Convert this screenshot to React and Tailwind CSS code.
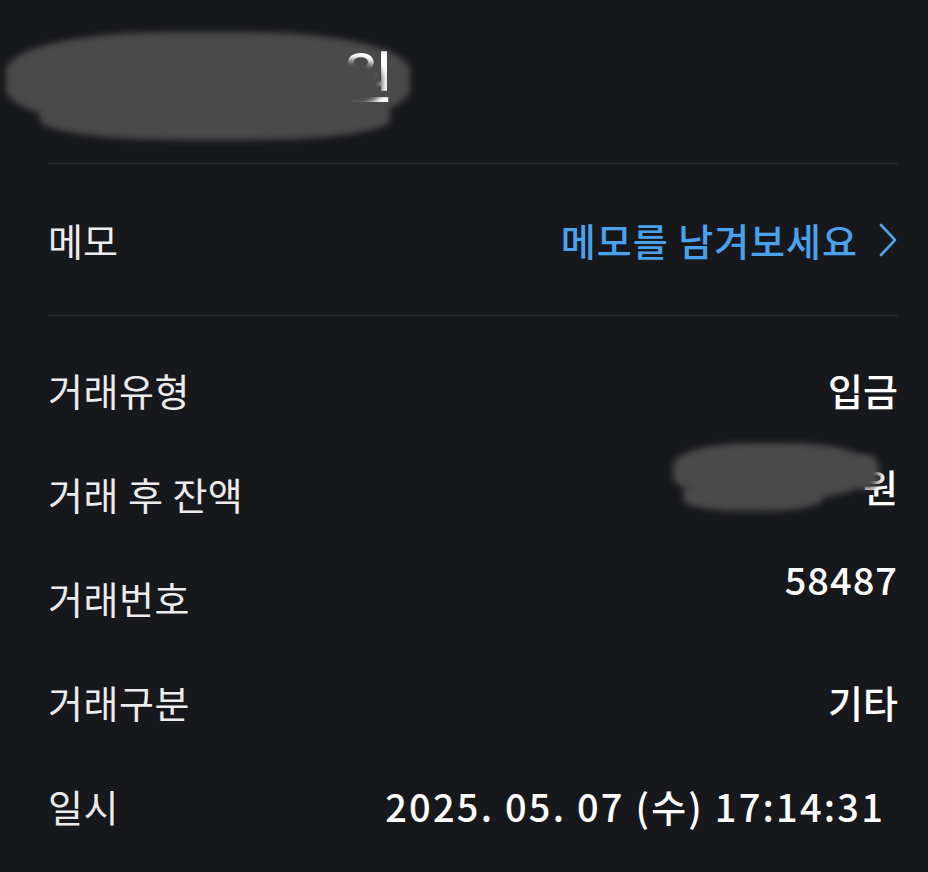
import React from 'react';

const font = { fontFamily: '"Noto Sans CJK KR", "Noto Sans", sans-serif' };

// gray smudge that hides redacted amounts
const Blur = ({ className }) => (
  <div className={`absolute rounded-[40%] bg-[#4a4a4a] blur-[3px] ${className}`} />
);

const Row = ({ label, children, valueClass = '' }) => (
  <div className="flex h-[104px] items-center justify-between">
    <span className="text-[38px] font-normal tracking-[0.5px] text-[#ececec]">{label}</span>
    <div className={`text-[38px] font-medium text-white ${valueClass}`}>{children}</div>
  </div>
);

export default function App() {
  return (
    <div className="min-h-screen bg-[#17181c] pl-[48px] pr-[30px]" style={font}>
      {/* header amount (redacted) */}
      <div className="relative h-[163px]">
        <Blur className="-left-[42px] top-[32px] h-[96px] w-[404px]" />
        <Blur className="-left-[8px] top-[90px] h-[50px] w-[350px]" />
        <div className="relative z-10 pl-[294px] pt-[46px] text-[56px] font-medium leading-none text-white">원</div>
        <Blur className="z-20 left-[270px] top-[60px] h-[46px] w-[64px]" />
      </div>
      <div className="border-t border-[#2c2d31]" />

      {/* memo */}
      <div className="flex h-[151px] items-center justify-between">
        <span className="text-[38px] text-[#ececec]">메모</span>
        <button className="flex items-center gap-[20px] text-[38px] font-medium tracking-[1px] text-[#4aa1ec]">
          <span>메모를 남겨보세요</span>
          <svg width="20" height="34" viewBox="0 0 20 34" fill="none">
            <path d="M3 2 L17 17 L3 32" stroke="#4aa1ec" strokeWidth="2.6" strokeLinecap="round" strokeLinejoin="round" />
          </svg>
        </button>
      </div>
      <div className="border-t border-[#2c2d31]" />

      <div className="pt-[21px]">
        <Row label="거래유형">입금</Row>
        <Row label="거래 후 잔액" valueClass="mb-[16px]">
          <div className="relative pl-[190px]">
            <span className="relative z-10">원</span>
            <Blur className="left-0 -top-[14px] h-[56px] w-[196px]" />
            <Blur className="left-[10px] top-[24px] h-[30px] w-[140px]" />
            <Blur className="z-20 left-[180px] -top-[2px] h-[34px] w-[26px]" />
          </div>
        </Row>
        <Row label="거래번호" valueClass="mb-[38px] tracking-[1px]">58487</Row>
        <Row label="거래구분">기타</Row>
        <Row label="일시" valueClass="mr-[13px] tracking-[2.2px]">2025. 05. 07 (수) 17:14:31</Row>
      </div>
    </div>
  );
}
